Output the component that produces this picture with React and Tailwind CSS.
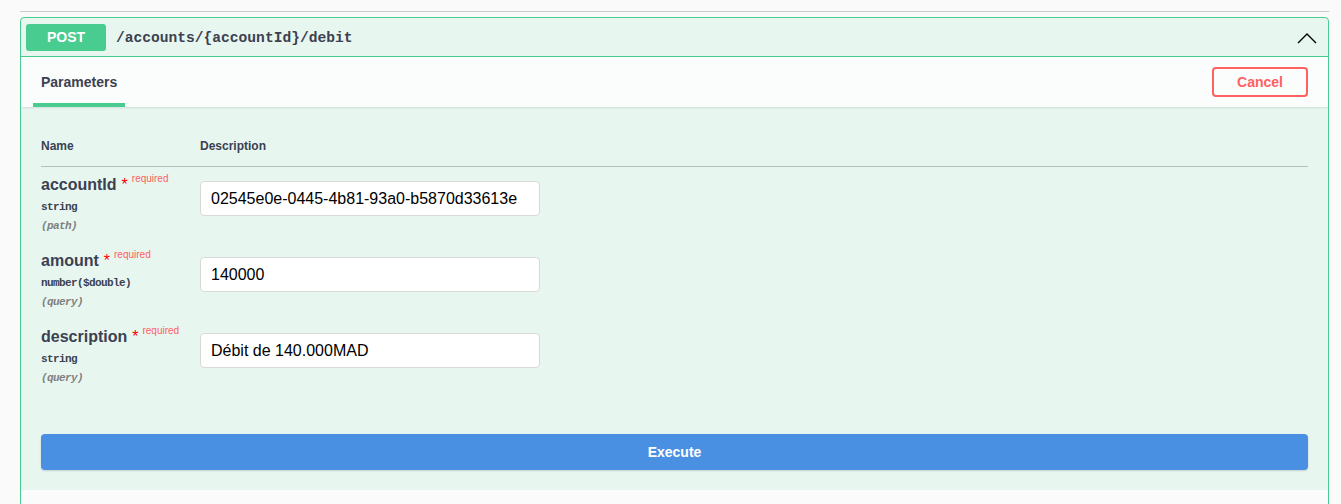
const params = [
  { name: "accountId", type: "string", where: "(path)", value: "02545e0e-0445-4b81-93a0-b5870d33613e" },
  { name: "amount", type: "number($double)", where: "(query)", value: "140000" },
  { name: "description", type: "string", where: "(query)", value: "Débit de 140.000MAD" },
];

const sans = "font-['Liberation_Sans',Arial,sans-serif]";
const mono = "font-['Liberation_Mono','DejaVu_Sans_Mono',monospace]";

function ParamRow({ param }) {
  return (
    <div className="flex h-[76px] pt-[9px]">
      <div className="w-[159px] shrink-0">
        <div className="-mt-[1px] flex items-start">
          <span className="text-[16px] font-bold leading-[20px] text-[#3b4151]">{param.name}</span>
          <span className="ml-[5px] text-[16px] leading-[20px] text-[#ff0000]">*</span>
          <span className="ml-[4px] -mt-[2px] text-[10px] leading-[12px] text-[#ff6060]">required</span>
        </div>
        <div className={`${mono} mt-[4px] text-[11px] font-bold leading-[16px] tracking-[-0.6px] text-[#3b4151]`}>
          {param.type}
        </div>
        <div className={`${mono} mt-[3px] text-[11px] italic font-bold leading-[16px] tracking-[-0.6px] text-[#808080]`}>
          {param.where}
        </div>
      </div>
      <div className="pt-[5px]">
        <div className="flex h-[35px] w-[340px] items-center rounded-[4px] border border-[#d9d9d9] bg-white px-[10px] text-[16px] text-black">
          {param.value}
        </div>
      </div>
    </div>
  );
}

export default function App() {
  return (
    <div className={`${sans} min-h-[504px] bg-[#fafafa] pl-[20px] pr-[12px] pt-[11px]`}>
      <div className="h-px bg-[#cccccc]" />

      <div className="mt-[5px] overflow-hidden rounded-[4px] border border-[#49cc90] bg-[#e8f6f0]">
        <div className="flex h-[39px] items-center border-b border-[#49cc90] px-[5px]">
          <span className="flex h-[27px] w-[80px] items-center justify-center rounded-[3px] bg-[#49cc90] text-[14px] font-bold text-white">
            POST
          </span>
          <span className={`${mono} ml-[10px] mt-[3px] text-[14.6px] font-bold text-[#3b4151]`}>
            /accounts/{"{accountId}"}/debit
          </span>
          <svg className="ml-auto mr-[6px] mt-[2px]" width="20" height="11" viewBox="0 0 20 11" fill="none">
            <polyline points="1,10 10,1 19,10" stroke="#000" strokeWidth="1.4" />
          </svg>
        </div>

        <div className="flex h-[50px] items-center justify-between bg-[#fbfdfc] pl-[12px] pr-[20px] shadow-[0_1px_2px_rgba(0,0,0,0.1)]">
          <div className="flex h-full flex-col justify-end">
            <div className="px-[8px] pb-[10px] text-[14px] font-bold text-[#3b4151]">Parameters</div>
            <div className="h-[4px] w-[92px] bg-[#49cc90]" />
          </div>
          <button className="h-[30px] w-[96px] rounded-[4px] border-2 border-[#ff6060] bg-transparent text-[14px] font-bold text-[#ff6060]">
            Cancel
          </button>
        </div>

        <div className="px-[20px] pb-[20px] pt-[30px]">
          <div className="flex border-b border-[#3b4151]/30 pb-[11px] text-[12px] font-bold text-[#3b4151]">
            <div className="w-[159px]">Name</div>
            <div>Description</div>
          </div>

          {params.map((param) => (
            <ParamRow key={param.name} param={param} />
          ))}

          <button className="mt-[39px] h-[36px] w-full rounded-[4px] bg-[#4990e2] text-[14px] font-bold text-white shadow-[0_1px_2px_rgba(0,0,0,0.15)]">
            Execute
          </button>
        </div>

        <div className="h-[20px] bg-[#fafbfa]" />
      </div>
    </div>
  );
}
